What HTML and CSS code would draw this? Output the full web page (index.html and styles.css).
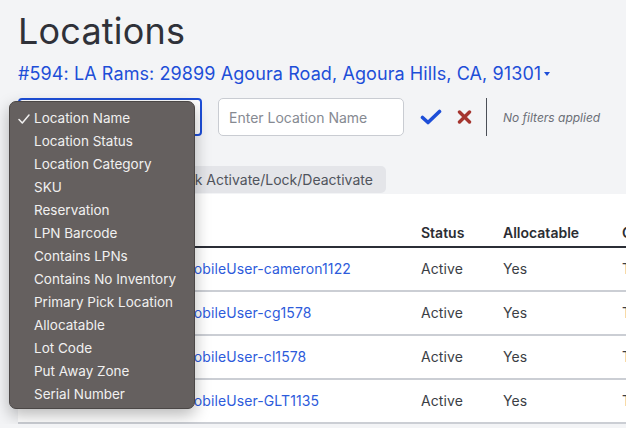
FILE: index.html
```html
<!DOCTYPE html>
<html lang="en">
<head>
    <meta charset="UTF-8">
    <meta name="viewport" content="width=device-width, initial-scale=1.0">
    <title>Locations</title>
    <link rel="stylesheet" href="styles.css">
</head>
<body>
    <div class="page">
        <h1 class="title">Locations</h1>
        <div class="facility">
            <a href="#">#594: LA Rams: 29899 Agoura Road, Agoura Hills, CA, 91301</a><span class="caret"></span>
        </div>

        <div class="filters">
            <div class="field-select">
                <span class="field-value">Location Name</span>
                <ul class="menu">
                    <li class="selected">
                        <svg class="tick" width="12" height="10" viewBox="0 0 12 10"><polyline points="1,5.5 4.3,9 11,1" fill="none" stroke="#f1f0f0" stroke-width="1.5" stroke-linecap="round" stroke-linejoin="round"/></svg>
                        Location Name
                    </li>
                    <li>Location Status</li>
                    <li>Location Category</li>
                    <li>SKU</li>
                    <li>Reservation</li>
                    <li>LPN Barcode</li>
                    <li>Contains LPNs</li>
                    <li>Contains No Inventory</li>
                    <li>Primary Pick Location</li>
                    <li>Allocatable</li>
                    <li>Lot Code</li>
                    <li>Put Away Zone</li>
                    <li>Serial Number</li>
                </ul>
            </div>
            <input class="field-input" type="text" placeholder="Enter Location Name">
            <button class="icon-btn apply" title="Apply">
                <svg width="22" height="16" viewBox="0 0 22 16"><polyline points="2.5,8.5 8,13.5 19.5,2.5" fill="none" stroke="#1d4ed8" stroke-width="3.6" stroke-linecap="round" stroke-linejoin="round"/></svg>
            </button>
            <button class="icon-btn clear" title="Clear">
                <svg width="15" height="14" viewBox="0 0 15 14"><path d="M2.5 2 L12.5 12 M12.5 2 L2.5 12" fill="none" stroke="#a5352f" stroke-width="3.4" stroke-linecap="round"/></svg>
            </button>
            <div class="divider"></div>
            <span class="filter-status">No filters applied</span>
        </div>

        <div class="actions">
            <button class="btn">Create Location</button>
            <button class="btn">Bulk Activate/Lock/Deactivate</button>
        </div>

        <div class="card">
            <table>
                <colgroup>
                    <col class="col-type">
                    <col class="col-name">
                    <col class="col-status">
                    <col class="col-alloc">
                    <col class="col-category">
                </colgroup>
                <thead>
                    <tr>
                        <th>Type</th>
                        <th></th>
                        <th>Status</th>
                        <th>Allocatable</th>
                        <th>Category</th>
                    </tr>
                </thead>
                <tbody>
                    <tr>
                        <td>Staging</td>
                        <td><a href="#">MobileUser-cameron1122</a></td>
                        <td>Active</td>
                        <td>Yes</td>
                        <td>Transient</td>
                    </tr>
                    <tr>
                        <td>Staging</td>
                        <td><a href="#">MobileUser-cg1578</a></td>
                        <td>Active</td>
                        <td>Yes</td>
                        <td>Transient</td>
                    </tr>
                    <tr>
                        <td>Staging</td>
                        <td><a href="#">MobileUser-cl1578</a></td>
                        <td>Active</td>
                        <td>Yes</td>
                        <td>Transient</td>
                    </tr>
                    <tr>
                        <td>Staging</td>
                        <td><a href="#">MobileUser-GLT1135</a></td>
                        <td>Active</td>
                        <td>Yes</td>
                        <td>Transient</td>
                    </tr>
                </tbody>
            </table>
        </div>
    </div>
</body>
</html>
```

FILE: styles.css
```css
/* Page */
html, body {
    overflow: hidden;
}

body {
    margin: 0;
    background-color: #f3f4f6;
    font-family: 'Inter', 'Noto Sans', sans-serif;
    color: #2f3139;
}

.page {
    width: 1000px;
    padding: 10px 0 0 18px;
}

.title {
    margin: 0;
    font-size: 36px;
    line-height: 43px;
    font-weight: 400;
    color: #2f3139;
    letter-spacing: 0.2px;
}

.facility {
    display: flex;
    align-items: center;
    margin-top: 9px;
    height: 24px;
    font-size: 18px;
    line-height: 24px;
    letter-spacing: 0.09px;
}

.facility a {
    color: #1d4ed8;
    text-decoration: none;
}

.caret {
    margin-left: 3px;
    border-left: 3.5px solid transparent;
    border-right: 3.5px solid transparent;
    border-top: 4px solid #1d4ed8;
}

/* Filter row */
.filters {
    display: flex;
    align-items: center;
    margin-top: 12px;
    height: 38px;
}

.field-select {
    position: relative;
    width: 184px;
    height: 38px;
    box-sizing: border-box;
    border: 2px solid #1d4ed8;
    border-radius: 4px;
    background-color: #fff;
    display: flex;
    align-items: center;
    padding: 0 10px;
    font-size: 14px;
}

.menu {
    position: absolute;
    top: 1px;
    left: -11px;
    width: 186px;
    box-sizing: border-box;
    margin: 0;
    padding: 5px 0 2px;
    list-style: none;
    background-color: #65605f;
    border: 1px solid #4b4746;
    border-radius: 7px;
    box-shadow: 0 6px 16px rgba(0, 0, 0, 0.28);
    z-index: 10;
}

.menu li {
    position: relative;
    height: 23px;
    line-height: 23px;
    padding-left: 24px;
    font-size: 13.5px;
    color: #f1f0f0;
    white-space: nowrap;
}

.menu .tick {
    position: absolute;
    left: 8px;
    top: 7px;
}

.field-input {
    margin-left: 16px;
    width: 186px;
    height: 38px;
    box-sizing: border-box;
    border: 1px solid #c9ccd2;
    border-radius: 5px;
    padding: 0 10px;
    font-family: inherit;
    font-size: 14px;
    background-color: #fff;
}

.field-input::placeholder {
    color: #868a92;
}

.icon-btn {
    display: flex;
    align-items: center;
    padding: 0;
    border: none;
    background: none;
}

.apply {
    margin-left: 16px;
}

.clear {
    margin-left: 15px;
}

.divider {
    margin-left: 14px;
    width: 1px;
    height: 38px;
    background-color: #4b4f57;
}

.filter-status {
    margin-left: 16px;
    font-size: 12px;
    font-style: italic;
    color: #6b6f77;
}

/* Actions */
.actions {
    display: flex;
    gap: 12px;
    margin-top: 30px;
}

.btn {
    height: 27px;
    padding: 0 13px;
    border: none;
    border-radius: 5px;
    background-color: #e4e5e9;
    font-family: inherit;
    font-size: 14px;
    color: #50545c;
}

/* Table card */
.card {
    margin-top: 1px;
    padding-top: 15px;
    background-color: #fff;
}

table {
    width: 880px;
    border-collapse: collapse;
    table-layout: fixed;
    font-size: 14px;
}

.col-type { width: 163px; }
.col-name { width: 240px; }
.col-status { width: 82px; }
.col-alloc { width: 119px; }
.col-category { width: 276px; }

th {
    text-align: left;
    font-weight: 600;
    line-height: 20px;
    padding: 14px 0 3px;
    border-bottom: 2px solid #2b2e36;
    color: #2b2d33;
}

td {
    padding: 11px 0;
    line-height: 20px;
    border-bottom: 2px solid #cbced4;
    color: #3b3e45;
    white-space: nowrap;
    letter-spacing: 0.1px;
}

th:first-child,
td:first-child {
    padding-left: 16px;
}

td a {
    color: #2d5bdb;
    text-decoration: none;
}
```
